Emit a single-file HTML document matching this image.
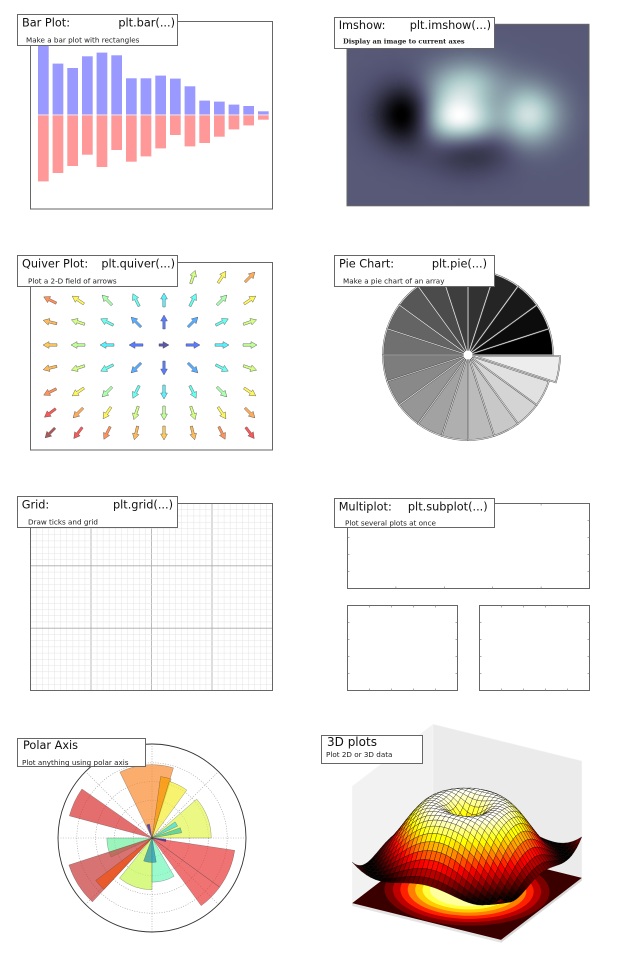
<!DOCTYPE html>
<html><head><meta charset="utf-8"><style>
html,body{margin:0;padding:0;background:#fff;width:622px;height:956px;overflow:hidden}
svg{display:block}
.t{font-family:"DejaVu Sans","Liberation Sans",sans-serif;font-size:11.3px;fill:#111}
.s{font-family:"DejaVu Sans","Liberation Sans",sans-serif;font-size:7.2px;fill:#222}
.box{fill:#fff;stroke:#666;stroke-width:1}
.fr{fill:none;stroke:#666;stroke-width:1}
</style></head><body>
<div style="position:relative;width:622px;height:956px">
<canvas id="cv" width="242" height="182" style="position:absolute;left:347px;top:24px"></canvas>
<svg id="sv" width="622" height="956" viewBox="0 0 622 956" style="position:absolute;left:0;top:0" xmlns="http://www.w3.org/2000/svg">
<g id="bars"></g>
<rect class="fr" x="30.5" y="21.5" width="242" height="187.5"/>
<rect class="box" x="17.5" y="14.5" width="160" height="31"/>
<text class="t" x="22" y="26.7">Bar Plot:</text>
<text class="t" x="175" y="26.7" text-anchor="end">plt.bar(...)</text>
<text class="s" x="26" y="42.5">Make a bar plot with rectangles</text>

<rect class="fr" x="347" y="24.3" width="242" height="181.5" stroke="#888"/>
<rect class="box" x="334.5" y="17.5" width="160" height="31"/>
<text class="t" x="338.7" y="29">Imshow:</text>
<text class="t" x="491" y="29" text-anchor="end">plt.imshow(...)</text>
<text x="343" y="43.7" style="font-family:'DejaVu Serif','Liberation Serif',serif;font-weight:bold;font-size:6.6px;fill:#222">Display an image to current axes</text>

<rect class="fr" x="30.5" y="262.5" width="242" height="187.5"/>
<g id="quiver"></g>
<rect class="box" x="17.5" y="255.5" width="160" height="31"/>
<text class="t" x="22" y="267.3">Quiver Plot:</text>
<text class="t" x="175" y="267.3" text-anchor="end">plt.quiver(...)</text>
<text class="s" x="28" y="283.3">Plot a 2-D field of arrows</text>

<g id="pie"></g>
<rect class="box" x="334.5" y="255.5" width="160" height="31"/>
<text class="t" x="339" y="267.3">Pie Chart:</text>
<text class="t" x="487" y="267.3" text-anchor="end">plt.pie(...)</text>
<text class="s" x="343" y="283.3">Make a pie chart of an array</text>

<g id="grid"></g>
<rect class="fr" x="30.5" y="503.5" width="242" height="187"/>
<rect class="box" x="17.5" y="496.5" width="160" height="31"/>
<text class="t" x="21.7" y="508.5">Grid:</text>
<text class="t" x="173" y="508.5" text-anchor="end">plt.grid(...)</text>
<text class="s" x="28" y="524.3">Draw ticks and grid</text>

<g id="multi"></g>
<rect class="box" x="334.5" y="498.5" width="160" height="29"/>
<text class="t" x="338.7" y="510.7">Multiplot:</text>
<text class="t" x="487.7" y="510.7" text-anchor="end">plt.subplot(...)</text>
<text class="s" x="345" y="525.7">Plot several plots at once</text>

<g id="polar"></g>
<rect class="box" x="17.5" y="738.5" width="128" height="28"/>
<text class="t" x="23" y="749">Polar Axis</text>
<text class="s" x="22" y="765">Plot anything using polar axis</text>

<g id="d3"></g>
<rect class="box" x="321.5" y="735.5" width="101" height="28"/>
<text class="t" x="327" y="746" style="font-size:12px">3D plots</text>
<text class="s" x="326" y="757">Plot 2D or 3D data</text>
</svg>
</div>
<script>
var NS="http://www.w3.org/2000/svg";
function el(p,tag,a){var e=document.createElementNS(NS,tag);for(var k in a)e.setAttribute(k,a[k]);document.getElementById(p).appendChild(e);return e;}
function cl(v){return Math.max(0,Math.min(1,v));}
function rgb(r,g,b){return "rgb("+Math.round(r*255)+","+Math.round(g*255)+","+Math.round(b*255)+")";}
var lefts=[37.7,52.3,67,81.7,96.3,111,125.7,140.3,155,169.7,184.3,199,213.7,228.3,243,257.7];
var tops=[40,63.3,67.7,56,52.3,55,78,78,75.3,78.3,86,100.3,101.3,104.3,105.7,111];
var bots=[181.7,173.3,166.3,155,167.3,150.3,162,156.7,148.7,135.3,146.7,143.3,137,129.7,125.7,120];
for(var i=0;i<16;i++){
 el("bars","rect",{x:lefts[i],y:tops[i],width:11.3,height:115-tops[i],fill:"#9999ff",stroke:"#fff","stroke-width":0.6});
 el("bars","rect",{x:lefts[i],y:115,width:11.3,height:bots[i]-115,fill:"#ff9999",stroke:"#fff","stroke-width":0.6});
}
(function(){
 var nx=40,ny=30,vals=[],mn=1e9,mx=-1e9;
 for(var j=0;j<ny;j++)for(var i=0;i<nx;i++){var x=-3+6*i/(nx-1),y=-3+6*j/(ny-1);
  var f=(1-x/2+Math.pow(x,5)+y*y*y)*Math.exp(-x*x-y*y);vals.push(f);mn=Math.min(mn,f);mx=Math.max(mx,f);}
 function interp(t,pts){for(var k=1;k<pts.length;k++){if(t<=pts[k][0]){var a=pts[k-1],b=pts[k];return a[1]+(b[1]-a[1])*(t-a[0])/(b[0]-a[0]);}}return 1;}
 var c=document.createElement("canvas");c.width=nx;c.height=ny;var cx=c.getContext("2d");var im=cx.createImageData(nx,ny);
 for(var j=0;j<ny;j++)for(var i=0;i<nx;i++){var t=(vals[j*nx+i]-mn)/(mx-mn);
  var r=interp(t,[[0,0],[0.746,0.653],[1,1]]),g=interp(t,[[0,0],[0.365,0.319],[0.746,0.778],[1,1]]),b=interp(t,[[0,0],[0.365,0.444],[1,1]]);
  var row=ny-1-j,p=(row*nx+i)*4;im.data[p]=r*255;im.data[p+1]=g*255;im.data[p+2]=b*255;im.data[p+3]=255;}
 cx.putImageData(im,0,0);
 var m=document.getElementById("cv").getContext("2d");m.imageSmoothingEnabled=true;m.imageSmoothingQuality="high";m.drawImage(c,0,0,nx,ny,0,0,242,182);
})();
function jet(t){return rgb(cl(1.5-Math.abs(4*t-3)),cl(1.5-Math.abs(4*t-2)),cl(1.5-Math.abs(4*t-1)));}
var qx=[50,78,107,136,164,193,222,250],qy=[277,300,322,345,368,392,413,433];
for(var r=0;r<8;r++)for(var c=0;c<8;c++){
 var dx=c-4,dy=r-3,d=Math.sqrt(dx*dx+dy*dy);var ang=d?Math.atan2(dy,dx):0;
 var col=jet(Math.min(1,d/5.66)),L=d?14:10;
 var cs=Math.cos(ang),sn=Math.sin(ang),x0=qx[c]-cs*L/2,y0=qy[r]-sn*L/2;
 var pts=[[0,-1.2],[L-6,-1.2],[L-6,-3.4],[L,0],[L-6,3.4],[L-6,1.2],[0,1.2]].map(function(p){return (x0+p[0]*cs-p[1]*sn).toFixed(1)+","+(y0+p[0]*sn+p[1]*cs).toFixed(1);}).join(" ");
 el("quiver","polygon",{points:pts,fill:col,"fill-opacity":0.65,stroke:"#444","stroke-width":0.4});
}
function wedge(g,cx,cy,r,a1,a2,a){var p1=[cx+r*Math.cos(a1*Math.PI/180),cy-r*Math.sin(a1*Math.PI/180)],p2=[cx+r*Math.cos(a2*Math.PI/180),cy-r*Math.sin(a2*Math.PI/180)];
 a.d="M"+cx+","+cy+" L"+p1[0].toFixed(2)+","+p1[1].toFixed(2)+" A"+r+","+r+" 0 "+((a2-a1)>180?1:0)+",0 "+p2[0].toFixed(2)+","+p2[1].toFixed(2)+" Z";return el(g,"path",a);}
for(var i=0;i<20;i++){var a1=i*18,a2=a1+18,cx=468,cy=355;
 if(i==19){var mid=(a1+a2)/2*Math.PI/180;cx+=7*Math.cos(mid);cy-=7*Math.sin(mid);}
 var gv=i/19*0.93;wedge("pie",cx,cy,85,a1,a2,{fill:rgb(gv,gv,gv),stroke:"#555","stroke-width":1.6});
 wedge("pie",cx,cy,85,a1,a2,{fill:"none",stroke:"#fff","stroke-width":0.6});}
el("pie","circle",{cx:468,cy:355,r:4.5,fill:"#fff"});
for(var k=1;k<40;k++){var x=30.5+k*242/40;el("grid","line",{x1:x,y1:503.5,x2:x,y2:690.5,stroke:k%10?"#e4e4e4":"#aaa","stroke-width":k%10?0.5:0.8});}
for(var k=1;k<30;k++){var y=503.5+k*187/30;el("grid","line",{x1:30.5,y1:y,x2:272.5,y2:y,stroke:k%10?"#e4e4e4":"#aaa","stroke-width":k%10?0.5:0.8});}
[[347,503.5,242,85],[347,605.5,110,85],[479,605.5,110,85]].forEach(function(f){
 el("multi","rect",{x:f[0]+0.5,y:f[1],width:f[2],height:f[3],fill:"none",stroke:"#666","stroke-width":1});
 for(var k=1;k<5;k++){var x=f[0]+0.5+k*f[2]/5;el("multi","line",{x1:x,y1:f[1],x2:x,y2:f[1]+2,stroke:"#777","stroke-width":0.6});el("multi","line",{x1:x,y1:f[1]+f[3],x2:x,y2:f[1]+f[3]-2,stroke:"#777","stroke-width":0.6});}
 for(var k=1;k<5;k++){var y=f[1]+k*f[3]/5;el("multi","line",{x1:f[0]+0.5,y1:y,x2:f[0]+2.5,y2:y,stroke:"#777","stroke-width":0.6});el("multi","line",{x1:f[0]+f[2]+0.5,y1:y,x2:f[0]+f[2]-1.5,y2:y,stroke:"#777","stroke-width":0.6});}
});
(function(){var cx=152,cy=838,R=94;
 for(var k=1;k<5;k++)el("polar","circle",{cx:cx,cy:cy,r:R*k/5,fill:"none",stroke:"#999","stroke-width":0.6,"stroke-dasharray":"1,1.5"});
 for(var k=0;k<4;k++){var a=k*Math.PI/4;el("polar","line",{x1:cx-R*Math.cos(a),y1:cy+R*Math.sin(a),x2:cx+R*Math.cos(a),y2:cy-R*Math.sin(a),stroke:"#999","stroke-width":0.6,"stroke-dasharray":"1,1.5"});}
 var W=[[73,116,0.78,"#f98a30"],[72,82,0.66,"#fa9a00"],[54,73,0.63,"#f5ee30"],[0,41,0.63,"#e4f550"],[25,35,0.3,"#30d8f0"],[10,20,0.32,"#30c8a0"],
 [145,165,0.91,"#d83030"],[100,112,0.15,"#2020c0"],[180,205,0.48,"#70f0a0"],[198,227,0.93,"#c83838"],[217,227,0.75,"#f05010"],[231,270,0.55,"#c8f850"],
 [270,300,0.47,"#70f8b8"],[250,280,0.26,"#2090b0"],[-36,-8.5,0.89,"#e83838"],[-54,-36,0.89,"#e83838"],[-15,-5,0.15,"#2020b0"]];
 W.forEach(function(w){wedge("polar",cx,cy,R*w[2],w[0],w[1],{fill:w[3],"fill-opacity":0.7,stroke:"#333","stroke-width":0.4,"stroke-opacity":0.6});});
 el("polar","circle",{cx:cx,cy:cy,r:R,fill:"none",stroke:"#333","stroke-width":0.9});
})();
(function(){
 function P(x,y,z){return [467+18.6*x+10.1*y, 890.5+4.6*x-7.75*y-29*(z+2)];}
 function poly(pts,a){a.points=pts.map(function(p){return p[0].toFixed(1)+","+p[1].toFixed(1);}).join(" ");return el("d3","polygon",a);}
 var zt=2.03;
 poly([P(-4,-4,-2),P(-4,4,-2),P(-4,4,zt),P(-4,-4,zt)],{fill:"#f2f2f2",stroke:"#f8f8f8","stroke-width":0.5});
 poly([P(-4,4,-2),P(4,4,-2),P(4,4,zt),P(-4,4,zt)],{fill:"#ebebeb",stroke:"#f4f4f4","stroke-width":0.5});
 poly([P(-4,-4,-2),P(4,-4,-2),P(4,-4,-2.1),P(-4,-4,-2.1)],{fill:"#e4e4e4"});
 poly([P(4,-4,-2),P(4,4,-2),P(4,4,-2.1),P(4,-4,-2.1)],{fill:"#d8d8d8"});
 var defs=el("d3","defs",{});var cp=document.createElementNS(NS,"clipPath");cp.setAttribute("id","fc");var rr=document.createElementNS(NS,"rect");
 rr.setAttribute("x",-4);rr.setAttribute("y",-4);rr.setAttribute("width",8);rr.setAttribute("height",8);cp.appendChild(rr);defs.appendChild(cp);
 var g=el("d3","g",{transform:"matrix(18.6,4.6,10.1,-7.75,467,890.5)"});
 var gi=document.createElementNS(NS,"g");gi.setAttribute("clip-path","url(#fc)");g.appendChild(gi);
 var bands=[[6,"#3a0000"],[3.9,"#7a0000"],[3.5,"#c00000"],[3.15,"#ff2000"],[2.8,"#ff8000"],[2.45,"#ffcc00"],[2.1,"#ffff40"],[1.75,"#ffffa0"],[0.9,"#ffffc8"]];
 bands.forEach(function(b){var c=document.createElementNS(NS,"circle");c.setAttribute("cx",0);c.setAttribute("cy",0);c.setAttribute("r",b[0]);c.setAttribute("fill",b[1]);gi.appendChild(c);});
 var n=32,s=0.25,q=[];
 function Z(x,y){return Math.sin(Math.sqrt(x*x+y*y));}
 for(var i=0;i<n;i++)for(var j=0;j<n;j++){var x=-4+i*s,y=-4+j*s;var xc=x+s/2,yc=y+s/2;
  var zs=[Z(x,y),Z(x+s,y),Z(x+s,y+s),Z(x,y+s)],za=(zs[0]+zs[1]+zs[2]+zs[3])/4;
  q.push({d:4.6*xc-7.75*yc,pts:[P(x,y,zs[0]),P(x+s,y,zs[1]),P(x+s,y+s,zs[2]),P(x,y+s,zs[3])],z:za});}
 q.sort(function(a,b){return a.d-b.d;});
 q.forEach(function(o){var t=(o.z+1)/2;var c=rgb(cl(t/0.365),cl((t-0.365)/0.375),cl((t-0.74)/0.26));
  poly(o.pts,{fill:c,stroke:"#000","stroke-width":0.35,"stroke-opacity":0.8});});
})();
</script>
</body></html>
